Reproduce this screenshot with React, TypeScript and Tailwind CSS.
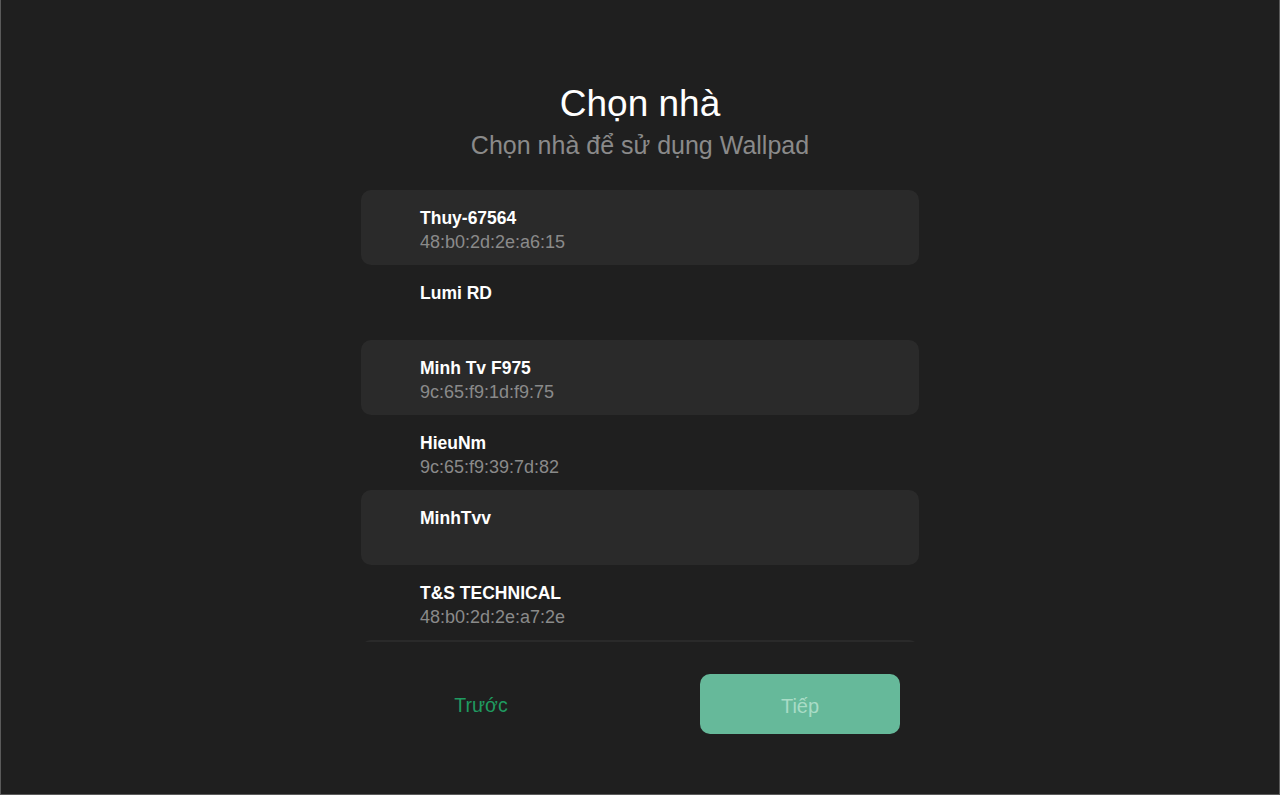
import React from "react";

type Home = {
  name: string;
  mac?: string;
};

const HOMES: Home[] = [
  { name: "Thuy-67564", mac: "48:b0:2d:2e:a6:15" },
  { name: "Lumi RD" },
  { name: "Minh Tv F975", mac: "9c:65:f9:1d:f9:75" },
  { name: "HieuNm", mac: "9c:65:f9:39:7d:82" },
  { name: "MinhTvv" },
  { name: "T&S TECHNICAL", mac: "48:b0:2d:2e:a7:2e" },
  { name: "Lumi Office", mac: "48:b0:2d:2e:a8:01" },
];

const HomeItem = ({ home, shaded }: { home: Home; shaded: boolean }) => (
  <div
    className={`h-[75px] shrink-0 rounded-[10px] pl-[59px] pt-[16px] ${
      shaded ? "bg-[#2a2a2a]" : ""
    }`}
  >
    <div className="text-[17.5px] leading-6 font-semibold text-white">
      {home.name}
    </div>
    {home.mac && (
      <div className="text-[18px] leading-6 text-[#8a8a8a]">{home.mac}</div>
    )}
  </div>
);

export default function App() {
  return (
    <div
      className="h-[795px] w-[1280px] border-x border-b border-[#5a5a5a] bg-[#1f1f1f] flex flex-col items-center"
      style={{ fontFamily: '"Liberation Sans", Arial, sans-serif' }}
    >
      <h1 className="mt-[83px] text-[37px] leading-[42px] font-medium text-white">
        Chọn nhà
      </h1>
      <p className="mt-[5px] text-[25px] leading-[30px] text-[#8a8a8a]">
        Chọn nhà để sử dụng Wallpad
      </p>

      <div className="mt-[30px] w-[558px] h-[452px] overflow-hidden flex flex-col">
        {HOMES.map((home, i) => (
          <HomeItem key={home.name} home={home} shaded={i % 2 === 0} />
        ))}
      </div>

      <div className="mt-[32px] w-[558px] flex items-center">
        <button className="w-[240px] h-[60px] pt-[4px] text-[19.5px] text-[#1f9a60]">
          Trước
        </button>
        <div className="flex-1" />
        <button className="mr-[19px] w-[200px] h-[60px] pt-[4px] rounded-[10px] bg-[#66b99a] text-[20px] text-[#a9dcc6]">
          Tiếp
        </button>
      </div>
    </div>
  );
}
